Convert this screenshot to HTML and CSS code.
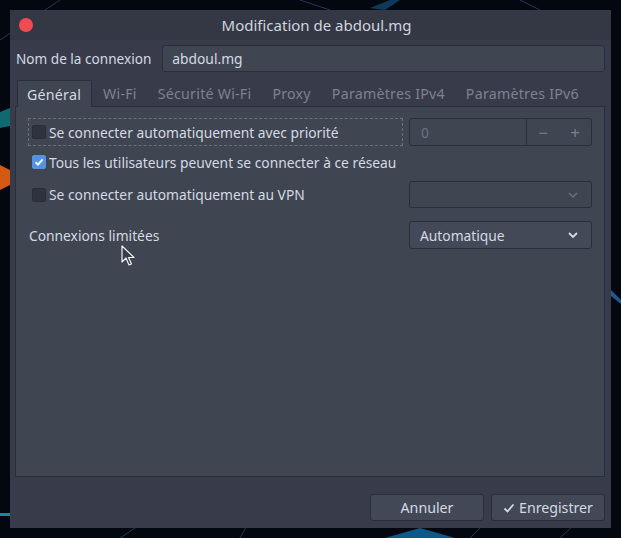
FILE: index.html
```html
<!DOCTYPE html>
<html lang="fr">
<head>
<meta charset="utf-8">
<title>Modification de abdoul.mg</title>
<link rel="stylesheet" href="styles.css">
</head>
<body>
<svg class="wallpaper" width="621" height="538" viewBox="0 0 621 538">
  <path d="M0 40 L60 0 M120 538 L170 505 M240 538 L250 520 M470 538 L480 528 M560 538 L600 500 M300 0 L330 10 M520 0 L540 10" stroke="#1b3a5a" stroke-width="1" fill="none"/>
  <path d="M0 112 L10 108 L10 126 L0 128 Z" fill="#0e6a70"/>
  <path d="M0 165 L10 170 L10 185 L0 190 Z" fill="#d45a14"/>
  <path d="M0 513 L10 513 L10 516 L0 516 Z" fill="#1a8a9a"/>
  <path d="M611 290 L621 300 L621 304 L611 296 Z" fill="#1f5a8a"/>
  <path d="M385 538 L420 528 L455 538 Z" fill="#0d5a8a"/>
  <path d="M370 8 L390 0 L400 0 L385 10 Z" fill="#0d3a5a"/>
</svg>
<div class="window">
  <header class="titlebar">
    <span class="close"></span>
    <span class="title">Modification de abdoul.mg</span>
  </header>
  <div class="body">
    <div class="name-row">
      <label class="name-label">Nom de la connexion</label>
      <div class="entry">abdoul.mg</div>
    </div>
    <nav class="tabs">
      <span class="tab active">Général</span>
      <span class="tab">Wi-Fi</span>
      <span class="tab">Sécurité Wi-Fi</span>
      <span class="tab">Proxy</span>
      <span class="tab">Paramètres IPv4</span>
      <span class="tab">Paramètres IPv6</span>
    </nav>
    <section class="panel">
      <div class="row row1">
        <div class="check focus"><span class="box"></span><span>Se connecter automatiquement avec priorité</span></div>
        <div class="spin">
          <span class="spin-value">0</span>
          <span class="spin-btn">&minus;</span>
          <span class="spin-btn">+</span>
        </div>
      </div>
      <div class="row row2">
        <div class="check"><span class="box checked"><svg width="14" height="14" viewBox="0 0 14 14"><path d="M3.5 7.2 L6 9.6 L10.6 4.4" stroke="#ffffff" stroke-width="2" fill="none"/></svg></span><span>Tous les utilisateurs peuvent se connecter à ce réseau</span></div>
      </div>
      <div class="row row3">
        <div class="check"><span class="box"></span><span>Se connecter automatiquement au VPN</span></div>
        <div class="combo disabled"><span></span><svg width="12" height="8" viewBox="0 0 12 8"><path d="M2 2 L6 6 L10 2" stroke="#6c7180" stroke-width="1.5" fill="none"/></svg></div>
      </div>
      <div class="row row4">
        <div class="plain-label">Connexions limitées</div>
        <div class="combo"><span>Automatique</span><svg width="12" height="8" viewBox="0 0 12 8"><path d="M2 2 L6 6 L10 2" stroke="#d3dae3" stroke-width="1.8" fill="none"/></svg></div>
      </div>
      <svg class="cursor" width="14" height="22" viewBox="0 0 14 22"><path d="M1 1 L1 17 L5 13 L8 20 L10.5 19 L7.5 12.5 L13 12.5 Z" fill="#3a3d45" stroke="#f0f0f0" stroke-width="1.2" stroke-linejoin="round"/></svg>
    </section>
    <footer class="actions">
      <button class="btn">Annuler</button>
      <button class="btn"><svg width="12" height="12" viewBox="0 0 12 12"><path d="M1.5 6.5 L4.5 9.5 L10.5 2.5" stroke="#d3dae3" stroke-width="1.8" fill="none"/></svg>Enregistrer</button>
    </footer>
  </div>
</div>
</body>
</html>
```
FILE: styles.css
```css
* { box-sizing: border-box; }
html, body { margin: 0; }
body {
  width: 621px;
  height: 538px;
  background: #03070f;
  font-family: "Noto Sans", "DejaVu Sans", sans-serif;
  font-size: 13.8px;
  color: #d3dae3;
  padding: 10px;
  position: relative;
  overflow: hidden;
}
.wallpaper { position: absolute; left: 0; top: 0; }
.window {
  position: relative;
  width: 601px;
  height: 518px;
  background: #383c4a;
  display: flex;
  flex-direction: column;
}
.titlebar {
  height: 30px;
  background: #343845;
  display: flex;
  align-items: center;
  justify-content: center;
  position: relative;
  padding-left: 12px;
  font-size: 15px;
  color: #cfd5de;
}
.close {
  position: absolute;
  left: 9px;
  top: 8px;
  width: 14px;
  height: 14px;
  border-radius: 50%;
  background: #f24a52;
}
.body {
  flex: 1;
  display: flex;
  flex-direction: column;
  padding: 5px 6px 7px 5px;
}
.name-row {
  display: flex;
  align-items: center;
  gap: 11px;
  height: 27px;
}
.name-label { padding-left: 1px; white-space: nowrap; font-size: 13.6px; }
.entry {
  flex: 1;
  height: 27px;
  background: #404552;
  border: 1px solid #2b2e39;
  border-radius: 3px;
  display: flex;
  align-items: center;
  padding-left: 9px;
}
.tabs {
  display: flex;
  margin-top: 8px;
  height: 27px;
  padding-left: 2px;
  position: relative;
  z-index: 1;
  font-size: 14.2px;
}
.tab {
  padding: 0 10px 0 11px;
  display: flex;
  align-items: center;
  color: #7c8290;
  white-space: nowrap;
  letter-spacing: 0.25px;
}
.tab.active {
  background: #404552;
  color: #d3dae3;
  border: 1px solid #2b2e39;
  border-bottom: none;
  border-radius: 2px 2px 0 0;
  padding: 0 10px 0 9px;
}
.panel {
  position: relative;
  margin-top: -1px;
  height: 371px;
  background: #404552;
  border: 1px solid #2b2e39;
  padding: 11px 12px 0 12px;
  display: flex;
  flex-direction: column;
}
.row {
  display: flex;
  align-items: center;
  justify-content: space-between;
}
.row1 { height: 28px; }
.row2 { height: 24px; margin-top: 4px; }
.row3 { height: 27px; margin-top: 7px; }
.row4 { height: 28px; margin-top: 13px; }
.check {
  display: flex;
  align-items: center;
  gap: 3px;
  height: 100%;
  padding-left: 4px;
  white-space: nowrap;
}
.check.focus {
  width: 375px;
  border: 1px dashed #6a707e;
  padding-left: 3px;
}
.box {
  width: 14px;
  height: 14px;
  border-radius: 2px;
  background: #2f333e;
  border: 1px solid #2a2d37;
  display: flex;
  align-items: center;
  justify-content: center;
}
.box.checked { background: #5294e2; border-color: #5294e2; }
.box svg { display: block; flex: none; }
.spin, .combo {
  width: 183px;
  height: 100%;
  border: 1px solid #2b2e39;
  border-radius: 3px;
  display: flex;
  align-items: center;
}
.spin { background: #404552; }
.spin-value {
  flex: 1;
  height: 100%;
  display: flex;
  align-items: center;
  padding-left: 11px;
  color: #6e7482;
  border-right: 1px solid #2b2e39;
}
.spin-btn {
  width: 32px;
  text-align: center;
  font-size: 17px;
  color: #7a8090;
}
.combo {
  background: #444957;
  justify-content: space-between;
  padding: 0 12px 0 10px;
}
.combo.disabled { background: #404552; }
.combo svg { display: block; }
.plain-label { padding-left: 1px; }
.cursor { position: absolute; left: 105px; top: 138px; }
.actions {
  margin-top: auto;
  display: flex;
  justify-content: flex-end;
  gap: 7px;
}
.btn {
  width: 114px;
  height: 27px;
  background: #434856;
  border: 1px solid #2b2e39;
  border-radius: 3px;
  color: #d3dae3;
  font-family: inherit;
  font-size: 14.2px;
  display: flex;
  align-items: center;
  justify-content: center;
  gap: 4px;
  padding: 0;
}
```
